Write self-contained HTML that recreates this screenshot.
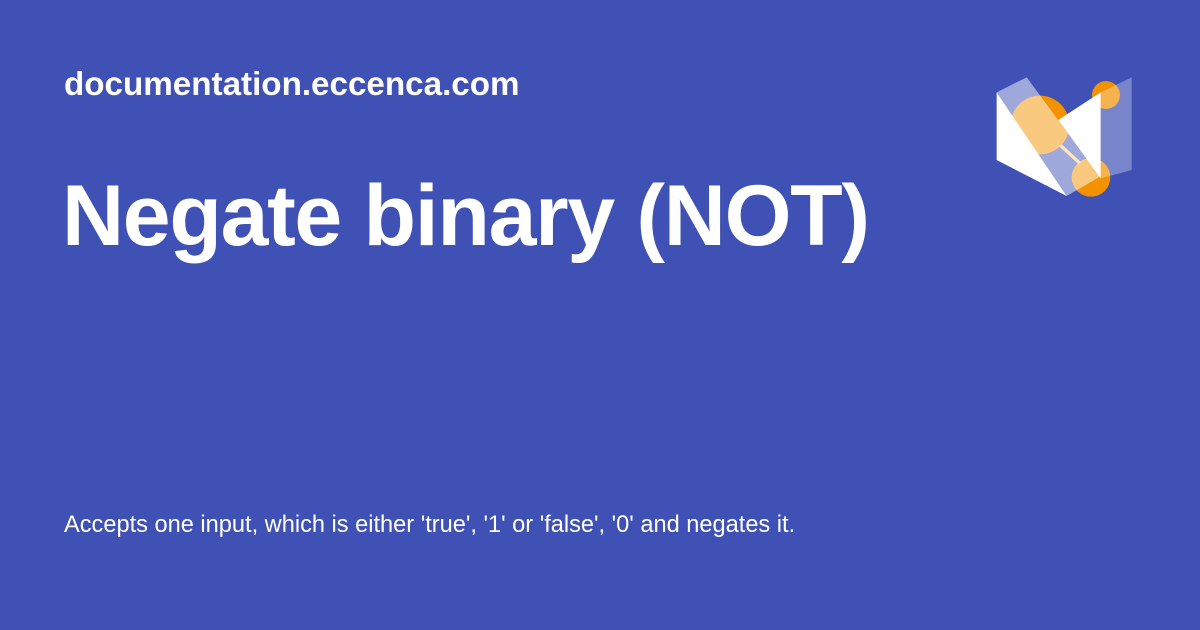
<!DOCTYPE html>
<html><head><style>
body{margin:0;width:1200px;height:630px;background:#3f51b5;font-family:"Liberation Sans",Roboto,sans-serif;color:#fff;position:relative;overflow:hidden}
.d{position:absolute;left:64px;top:66px;font-size:33.2px;font-weight:bold}
.t{position:absolute;left:62px;top:167px;font-size:86px;font-weight:bold;letter-spacing:-1.3px}
.p{position:absolute;left:64px;top:512px;font-size:23.6px}
svg{position:absolute;left:980px;top:60px}
</style></head><body>
<div class="d">documentation.eccenca.com</div>
<div class="t">Negate binary (NOT)</div>
<div class="p">Accepts one input, which is either 'true', '1' or 'false', '0' and negates it.</div>
<svg width="170" height="150" viewBox="0 0 510 450">
<circle cx="180" cy="195" r="88" fill="#f39200"/>
<circle cx="378" cy="105" r="42" fill="#f39200"/>
<circle cx="333" cy="352" r="58" fill="#f39200"/>
<line x1="240" y1="255" x2="300" y2="310" stroke="#f8c880" stroke-width="10"/>
<polygon points="50,97 50,300 260,408" fill="#fff"/>
<polygon points="235,180 362,97 362,355" fill="#fff"/>
<polygon points="50,97 140,52 360,350 260,408" fill="#fff" fill-opacity="0.5"/>
<polygon points="362,97 455,52 455,330 362,355" fill="#fff" fill-opacity="0.3"/>
</svg>
</body></html>
